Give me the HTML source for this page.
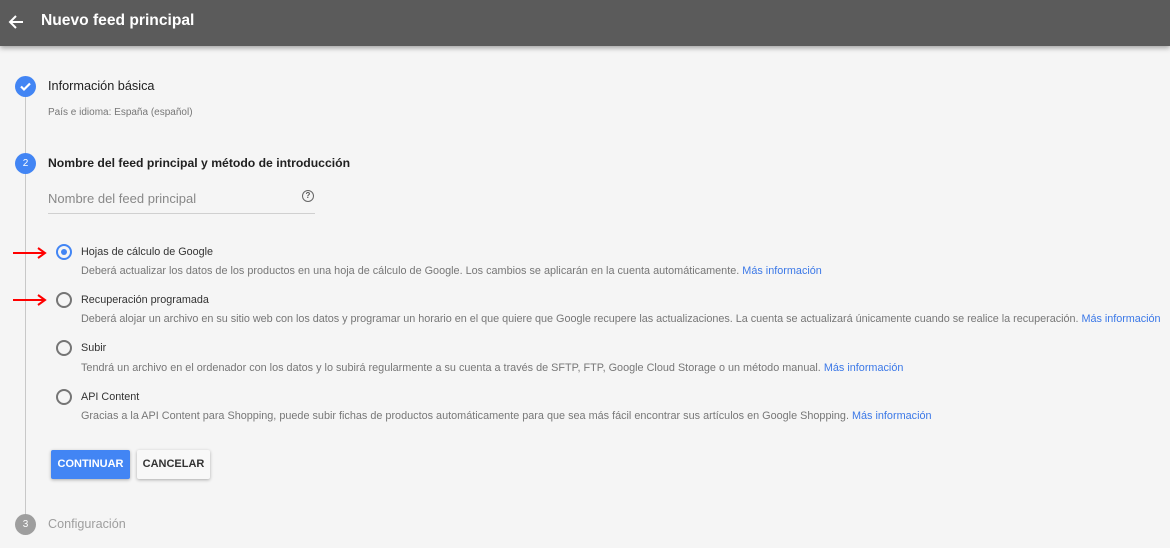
<!DOCTYPE html>
<html><head><meta charset="utf-8"><style>
*{margin:0;padding:0;box-sizing:border-box}
body{width:1170px;height:548px;overflow:hidden;background:#f5f5f5;font-family:"Liberation Sans",Arial,sans-serif;position:relative;color:#212121}
.hdr{position:absolute;left:0;top:0;width:1170px;height:46px;background:#5b5b5b;box-shadow:0 2px 5px rgba(0,0,0,.35)}
.hdr .t{position:absolute;left:41px;top:12px;color:#fff;font-size:15.6px;font-weight:bold}
.a{position:absolute}
.line{position:absolute;left:25px;top:96px;width:1px;height:420px;background:#c8c8c8}
.circ{position:absolute;width:21px;height:21px;border-radius:50%;background:#4285f4;color:#fff;font-size:10px;text-align:center;line-height:21px}
.radio{position:absolute;left:56px;width:16px;height:16px;border-radius:50%;border:2px solid #757575}
.lab{position:absolute;left:81px;font-size:10.8px;color:#333}
.desc{position:absolute;left:81px;font-size:10.85px;color:#777;white-space:nowrap}
.desc a{color:#3b78e7;text-decoration:none}
.btn{position:absolute;top:450px;height:29px;font-size:11px;font-weight:bold;line-height:29px;text-align:center;border-radius:2px;box-shadow:0 1px 3px rgba(0,0,0,.3)}
</style></head><body>
<div class="hdr"><svg class="a" style="left:7px;top:13px" width="18" height="18" viewBox="0 0 18 18"><path d="M16 9H3M9 3L3 9l6 6" stroke="#fff" stroke-width="2" fill="none"/></svg><div class="t">Nuevo feed principal</div></div>
<div class="line"></div>
<div class="circ" style="left:15px;top:76px"><svg width="21" height="21" viewBox="0 0 21 21"><path d="M6 10.5l3 3 6-6" stroke="#fff" stroke-width="2.2" fill="none"/></svg></div>
<div class="a" style="left:48px;top:79px;font-size:12.7px">Información básica</div>
<div class="a" style="left:48px;top:107px;font-size:10px;color:#777">País e idioma: España (español)</div>
<div class="circ" style="left:15px;top:153px">2</div>
<div class="a" style="left:48px;top:156px;font-size:12.2px;font-weight:bold">Nombre del feed principal y método de introducción</div>
<div class="a" style="left:48px;top:191px;font-size:13px;color:#888">Nombre del feed principal</div>
<div class="a" style="left:302px;top:190px;width:12px;height:12px;border:1.3px solid #666;border-radius:50%;font-size:8px;text-align:center;line-height:10px;color:#555;font-weight:bold">?</div>
<div class="a" style="left:48px;top:213px;width:267px;height:1px;background:#d0d0d0"></div>
<svg class="a" style="left:12px;top:246px" width="36" height="62" viewBox="0 0 36 62"><g stroke="red" stroke-width="2" fill="none"><path d="M1 7H33M26 2l7 5-7 5"/><path d="M1 54H33M26 49l7 5-7 5"/></g></svg>
<div class="radio" style="top:244px;border-color:#4285f4"><div style="position:absolute;left:3px;top:3px;width:6px;height:6px;border-radius:50%;background:#4285f4"></div></div>
<div class="lab" style="top:246px">Hojas de cálculo de Google</div>
<div class="desc" style="top:265px">Deberá actualizar los datos de los productos en una hoja de cálculo de Google. Los cambios se aplicarán en la cuenta automáticamente. <a>Más información</a></div>
<div class="radio" style="top:292px"></div>
<div class="lab" style="top:294px">Recuperación programada</div>
<div class="desc" style="top:313px;letter-spacing:-0.03px">Deberá alojar un archivo en su sitio web con los datos y programar un horario en el que quiere que Google recupere las actualizaciones. La cuenta se actualizará únicamente cuando se realice la recuperación. <a>Más información</a></div>
<div class="radio" style="top:340px"></div>
<div class="lab" style="top:342px">Subir</div>
<div class="desc" style="top:362px">Tendrá un archivo en el ordenador con los datos y lo subirá regularmente a su cuenta a través de SFTP, FTP, Google Cloud Storage o un método manual. <a>Más información</a></div>
<div class="radio" style="top:389px"></div>
<div class="lab" style="top:391px">API Content</div>
<div class="desc" style="top:410px">Gracias a la API Content para Shopping, puede subir fichas de productos automáticamente para que sea más fácil encontrar sus artículos en Google Shopping. <a>Más información</a></div>
<div class="btn" style="left:51px;width:79px;background:#4285f4;color:#fff">CONTINUAR</div>
<div class="btn" style="left:137px;width:73px;background:#f8f8f8;color:#333">CANCELAR</div>
<div class="circ" style="left:15px;top:514px;background:#9e9e9e">3</div>
<div class="a" style="left:48px;top:517px;font-size:12.6px;color:#9e9e9e">Configuración</div>
</body></html>
